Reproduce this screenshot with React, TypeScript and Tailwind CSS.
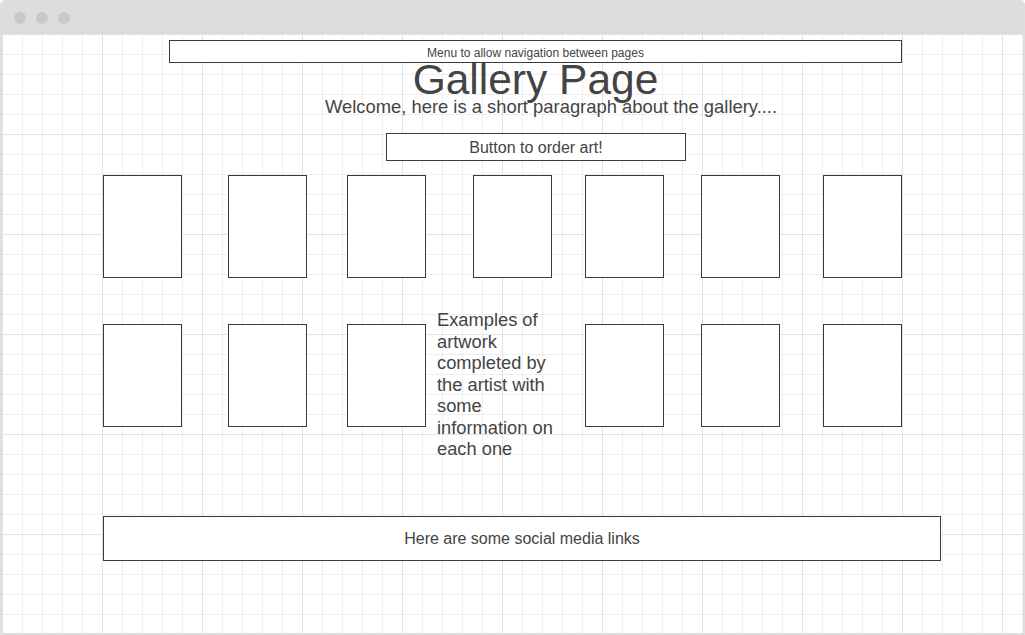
import React from "react";

const box = "shrink-0 border border-[#3a3a3a] bg-white";

export default function App() {
  return (
    <div className="w-[1025px] h-[635px] bg-white font-['Liberation_Sans',Arial,sans-serif] text-[#444]">
      <div className="flex h-full w-full flex-col overflow-hidden rounded-t-[5px] border-2 border-[#dedede]">
        {/* window chrome */}
        <div className="flex h-[32px] shrink-0 items-center gap-[10px] bg-[#dcdcdc] pl-[12px]">
          <span className="h-[12px] w-[12px] rounded-full bg-[#c8c8c8]" />
          <span className="h-[12px] w-[12px] rounded-full bg-[#c8c8c8]" />
          <span className="h-[12px] w-[12px] rounded-full bg-[#c8c8c8]" />
        </div>

        {/* canvas */}
        <div className="flex-1 bg-[linear-gradient(to_right,#e2e2e2_1px,transparent_1px),linear-gradient(to_bottom,#e2e2e2_1px,transparent_1px),linear-gradient(to_right,#eeeeee_1px,transparent_1px),linear-gradient(to_bottom,#eeeeee_1px,transparent_1px)] bg-[size:100px_100px,100px_100px,20px_20px,20px_20px]">
          <div className={`${box} ml-[167px] mt-[6px] flex h-[23px] w-[733px] items-center justify-center pt-[2px] text-[12px]`}>
            Menu to allow navigation between pages
          </div>

          <h1 className="ml-[167px] mt-[2px] h-[30px] w-[733px] text-center text-[42.5px] leading-[30px]">Gallery Page</h1>
          <p className="ml-[299px] mt-[2px] h-[20px] w-[500px] text-center text-[18.4px] leading-[20px]">
            Welcome, here is a short paragraph about the gallery....
          </p>

          <div className={`${box} ml-[384px] mt-[16px] flex h-[28px] w-[300px] items-center justify-center pt-[1px] text-[16px]`}>
            Button to order art!
          </div>

          {/* artwork row 1 */}
          <div className="mt-[14px] flex items-start">
            <div className={`${box} ml-[101px] h-[103px] w-[79px]`} />
            <div className={`${box} ml-[46px] h-[103px] w-[79px]`} />
            <div className={`${box} ml-[40px] h-[103px] w-[79px]`} />
            <div className={`${box} ml-[47px] h-[103px] w-[79px]`} />
            <div className={`${box} ml-[33px] h-[103px] w-[79px]`} />
            <div className={`${box} ml-[37px] h-[103px] w-[79px]`} />
            <div className={`${box} ml-[43px] h-[103px] w-[79px]`} />
          </div>

          {/* artwork row 2 */}
          <div className="mt-[31px] flex items-start">
            <div className={`${box} ml-[101px] mt-[15px] h-[103px] w-[79px]`} />
            <div className={`${box} ml-[46px] mt-[15px] h-[103px] w-[79px]`} />
            <div className={`${box} ml-[40px] mt-[15px] h-[103px] w-[79px]`} />
            <p className="ml-[11px] w-[124px] shrink-0 text-[18.3px] leading-[21.5px]">
              Examples of artwork completed by the artist with some information on each one
            </p>
            <div className={`${box} ml-[24px] mt-[15px] h-[103px] w-[79px]`} />
            <div className={`${box} ml-[37px] mt-[15px] h-[103px] w-[79px]`} />
            <div className={`${box} ml-[43px] mt-[15px] h-[103px] w-[79px]`} />
          </div>

          <div className={`${box} ml-[101px] mt-[56px] flex h-[45px] w-[838px] items-center justify-center pt-[1px] text-[16px]`}>
            Here are some social media links
          </div>
        </div>
      </div>
    </div>
  );
}
